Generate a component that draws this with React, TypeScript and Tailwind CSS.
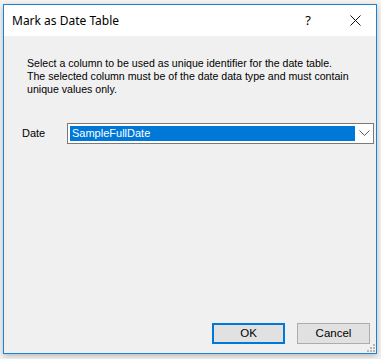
import React from 'react';

const ChevronDown = () => (
  <svg width="11" height="7" viewBox="0 0 11 7" fill="none">
    <path d="M0.5 0.5 L5.5 5.5 L10.5 0.5" stroke="#5a5a5a" strokeWidth="1" />
  </svg>
);

const CloseX = () => (
  <svg width="11" height="11" viewBox="0 0 11 11" fill="none">
    <path d="M0.5 0.5 L10.5 10.5 M10.5 0.5 L0.5 10.5" stroke="#111" strokeWidth="1" />
  </svg>
);

const SizeGrip = () => (
  <svg width="8" height="8" viewBox="0 0 8 8">
    <rect x="6" y="0" width="2" height="2" fill="#b8b8b8" />
    <rect x="3" y="3" width="2" height="2" fill="#b8b8b8" />
    <rect x="6" y="3" width="2" height="2" fill="#b8b8b8" />
    <rect x="0" y="6" width="2" height="2" fill="#b8b8b8" />
    <rect x="3" y="6" width="2" height="2" fill="#b8b8b8" />
    <rect x="6" y="6" width="2" height="2" fill="#b8b8b8" />
  </svg>
);

export default function App() {
  return (
    <div className="w-[381px] h-[359px] bg-[#f4f4f4] pl-[3px] pt-[4px] overflow-hidden">
      {/* dialog window */}
      <div className="w-[374px] h-[350px] border border-[#1883d7] bg-[#f0f0f0] flex flex-col shadow-[0_2px_6px_rgba(0,0,0,0.25)]">
        {/* title bar */}
        <div className="h-[31px] bg-white flex items-center shrink-0 font-['Noto_Sans',sans-serif] text-[12px] text-black">
          <span className="ml-[8px] mt-[1px] flex-1">Mark as Date Table</span>
          <span className="w-[20px] text-center mr-[27px] text-[13px]">?</span>
          <span className="w-[20px] flex justify-center mr-[11px]">
            <CloseX />
          </span>
        </div>

        {/* body */}
        <div className="flex-1 flex flex-col font-['Liberation_Sans',Arial,sans-serif] text-[10.6px] text-black relative">
          <p className="mt-[21px] ml-[23px] leading-[13px]">
            Select a column to be used as unique identifier for the date table.
            <br />
            The selected column must be of the date data type and must contain
            <br />
            unique values only.
          </p>

          <div className="mt-[27px] flex items-center">
            <span className="ml-[18px] w-[45px] text-[11px]">Date</span>
            <div className="w-[307px] h-[21px] border border-[#7a7a7a] bg-white flex items-center pl-[2px]">
              <div className="w-[285px] h-[15px] bg-[#0078d7] text-white text-[11px] leading-[15px] pl-[2px]">
                SampleFullDate
              </div>
              <div className="flex-1 flex justify-center">
                <ChevronDown />
              </div>
            </div>
          </div>

          <div className="flex-1" />

          <div className="flex justify-end gap-[12px] mr-[6px] mb-[9px] text-[11.5px]">
            <button className="w-[73px] h-[21px] border-2 border-[#0078d7] bg-[#e1e1e1] text-black">
              OK
            </button>
            <button className="w-[73px] h-[21px] border border-[#adadad] bg-[#e1e1e1] text-black">
              Cancel
            </button>
          </div>

          <div className="absolute right-[1px] bottom-[1px]">
            <SizeGrip />
          </div>
        </div>
      </div>
    </div>
  );
}
